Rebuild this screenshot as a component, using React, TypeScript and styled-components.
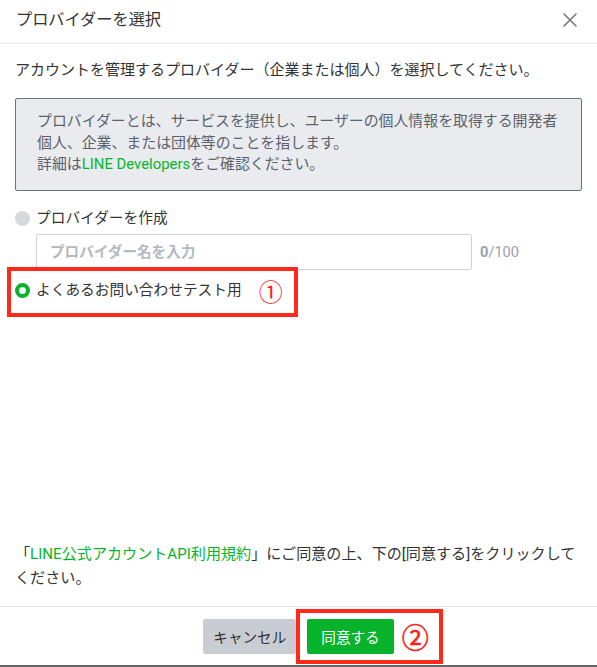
import React from "react";
import styled, { createGlobalStyle } from "styled-components";

const GlobalStyle = createGlobalStyle`
  html, body {
    margin: 0;
    padding: 0;
    background: #ffffff;
  }
  body {
    font-family: Roboto, "Noto Sans CJK JP", "Noto Sans", sans-serif;
    color: #333333;
  }
  * {
    box-sizing: border-box;
  }
`;

const App: React.FC = () => {
  return (
    <>
      <GlobalStyle />
      <Dialog>
        <Header>
          <Title>プロバイダーを選択</Title>
          <CloseButton aria-label="close">
            <svg width="14" height="14" viewBox="0 0 14 14">
              <path
                d="M1 1 L13 13 M13 1 L1 13"
                stroke="#777"
                strokeWidth="1.6"
                strokeLinecap="round"
              />
            </svg>
          </CloseButton>
        </Header>
        <Body>
          <Lead>
            アカウントを管理するプロバイダー（企業または個人）を選択してください。
          </Lead>
          <InfoBox>
            プロバイダーとは、サービスを提供し、ユーザーの個人情報を取得する開発者
            <br />
            個人、企業、または団体等のことを指します。
            <br />
            詳細は<GreenLink>LINE Developers</GreenLink>をご確認ください。
          </InfoBox>
          <RadioRow>
            <RadioMark checked={false} />
            <RadioLabel>プロバイダーを作成</RadioLabel>
          </RadioRow>
          <InputRow>
            <NameInput placeholder="プロバイダー名を入力" />
            <Counter>
              <strong>0</strong>/100
            </Counter>
          </InputRow>
          <SelectedRow>
            <RadioMark checked />
            <RadioLabel>よくあるお問い合わせテスト用</RadioLabel>
            <Marker>①</Marker>
            <RedFrame $inset="-13px -15px -16px -8px" />
          </SelectedRow>
          <Terms>
            「<GreenLink>LINE公式アカウントAPI利用規約</GreenLink>
            」にご同意の上、下の[同意する]をクリックして
            <br />
            ください。
          </Terms>
        </Body>
        <Footer>
          <CancelButton>キャンセル</CancelButton>
          <AgreeGroup>
            <AgreeButton>同意する</AgreeButton>
            <FloatMarker>②</FloatMarker>
            <RedFrame $inset="-10px -49px -10px -11px" />
          </AgreeGroup>
        </Footer>
      </Dialog>
    </>
  );
};

const Dialog = styled.div`
  width: 597px;
  height: 667px;
  display: flex;
  flex-direction: column;
  background: #ffffff;
  border-bottom: 2px solid #666666;
`;

const Header = styled.header`
  height: 44px;
  padding: 0 20px 0 16px;
  display: flex;
  align-items: center;
  justify-content: space-between;
  border-bottom: 1px solid #e6e6e6;
`;

const Title = styled.h1`
  margin: 0;
  font-size: 16.2px;
  font-weight: 400;
  color: #333333;
  line-height: 1;
  padding-bottom: 3px;
`;

const CloseButton = styled.button`
  border: 0;
  background: none;
  padding: 0;
  display: flex;
  cursor: pointer;
  margin-bottom: 3px;
`;

const Body = styled.main`
  flex: 1;
  display: flex;
  flex-direction: column;
  padding: 16px 15px 16px 15px;
`;

const Lead = styled.p`
  margin: 0;
  font-size: 15px;
  line-height: 21px;
  color: #333333;
  white-space: nowrap;
`;

const InfoBox = styled.div`
  margin-top: 17px;
  height: 93px;
  padding: 12px 16px 0 21px;
  background: #e9ebef;
  border: 1px solid #6c7380;
  border-radius: 2px;
  font-size: 14.9px;
  line-height: 21.5px;
  color: #5c626b;
  white-space: nowrap;
`;

const GreenLink = styled.span`
  color: #06b52a;
`;

const RadioRow = styled.label`
  margin-top: 17px;
  height: 21px;
  display: flex;
  align-items: center;
  gap: 6px;
`;

const RadioMark = styled.span<{ checked: boolean }>`
  width: 15px;
  height: 15px;
  border-radius: 50%;
  flex: none;
  background: ${(p) => (p.checked ? "#ffffff" : "#d5d9de")};
  border: ${(p) => (p.checked ? "4.5px solid #06b32a" : "none")};
`;

const RadioLabel = styled.span`
  font-size: 14.7px;
  line-height: 21px;
  color: #333333;
`;

const InputRow = styled.div`
  margin-top: 5px;
  padding-left: 21px;
  display: flex;
  align-items: center;
  gap: 8px;
`;

const NameInput = styled.input`
  width: 436px;
  height: 36px;
  border: 1px solid #cfd3d8;
  border-radius: 2px;
  padding: 0 13px;
  font-family: Roboto, "Noto Sans CJK JP", sans-serif;
  font-size: 14.6px;
  font-weight: 700;
  outline: none;
  &::placeholder {
    color: #b3b9c1;
  }
`;

const Counter = styled.span`
  font-size: 14.6px;
  color: #9aa1ab;
  strong {
    font-weight: 700;
  }
`;

const SelectedRow = styled.div`
  position: relative;
  margin-top: 10px;
  height: 21px;
  width: fit-content;
  display: flex;
  align-items: center;
  gap: 6px;
`;

const Marker = styled.span`
  margin-left: 11px;
  font-size: 24px;
  line-height: 1;
  color: #ff2016;
  font-family: "Noto Sans CJK JP", sans-serif;
`;

const FloatMarker = styled.span`
  position: absolute;
  left: calc(100% + 8px);
  top: 50%;
  transform: translateY(-50%);
  font-size: 27px;
  line-height: 1;
  color: #ff2016;
  font-family: "Noto Sans CJK JP", sans-serif;
  -webkit-text-stroke: 0.6px #ff2016;
`;

const RedFrame = styled.span<{ $inset: string }>`
  position: absolute;
  inset: ${(p) => p.$inset};
  border: 4px solid #ff2a1a;
  pointer-events: none;
`;

const Terms = styled.p`
  margin: auto 0 0;
  font-size: 15.1px;
  line-height: 24px;
  color: #333333;
  white-space: nowrap;
`;

const Footer = styled.footer`
  height: 59px;
  border-top: 1px solid #e6e6e6;
  display: flex;
  align-items: center;
  justify-content: center;
  gap: 11px;
`;

const BaseButton = styled.button`
  height: 35px;
  border: 0;
  border-radius: 2px;
  font-family: Roboto, "Noto Sans CJK JP", sans-serif;
  font-size: 14.6px;
  cursor: pointer;
`;

const CancelButton = styled(BaseButton)`
  padding: 0 10px;
  background: #c9cdd3;
  color: #333333;
`;

const AgreeGroup = styled.div`
  position: relative;
  display: flex;
`;

const AgreeButton = styled(BaseButton)`
  padding: 0 14px;
  background: #06b32a;
  color: #ffffff;
`;

export default App;
